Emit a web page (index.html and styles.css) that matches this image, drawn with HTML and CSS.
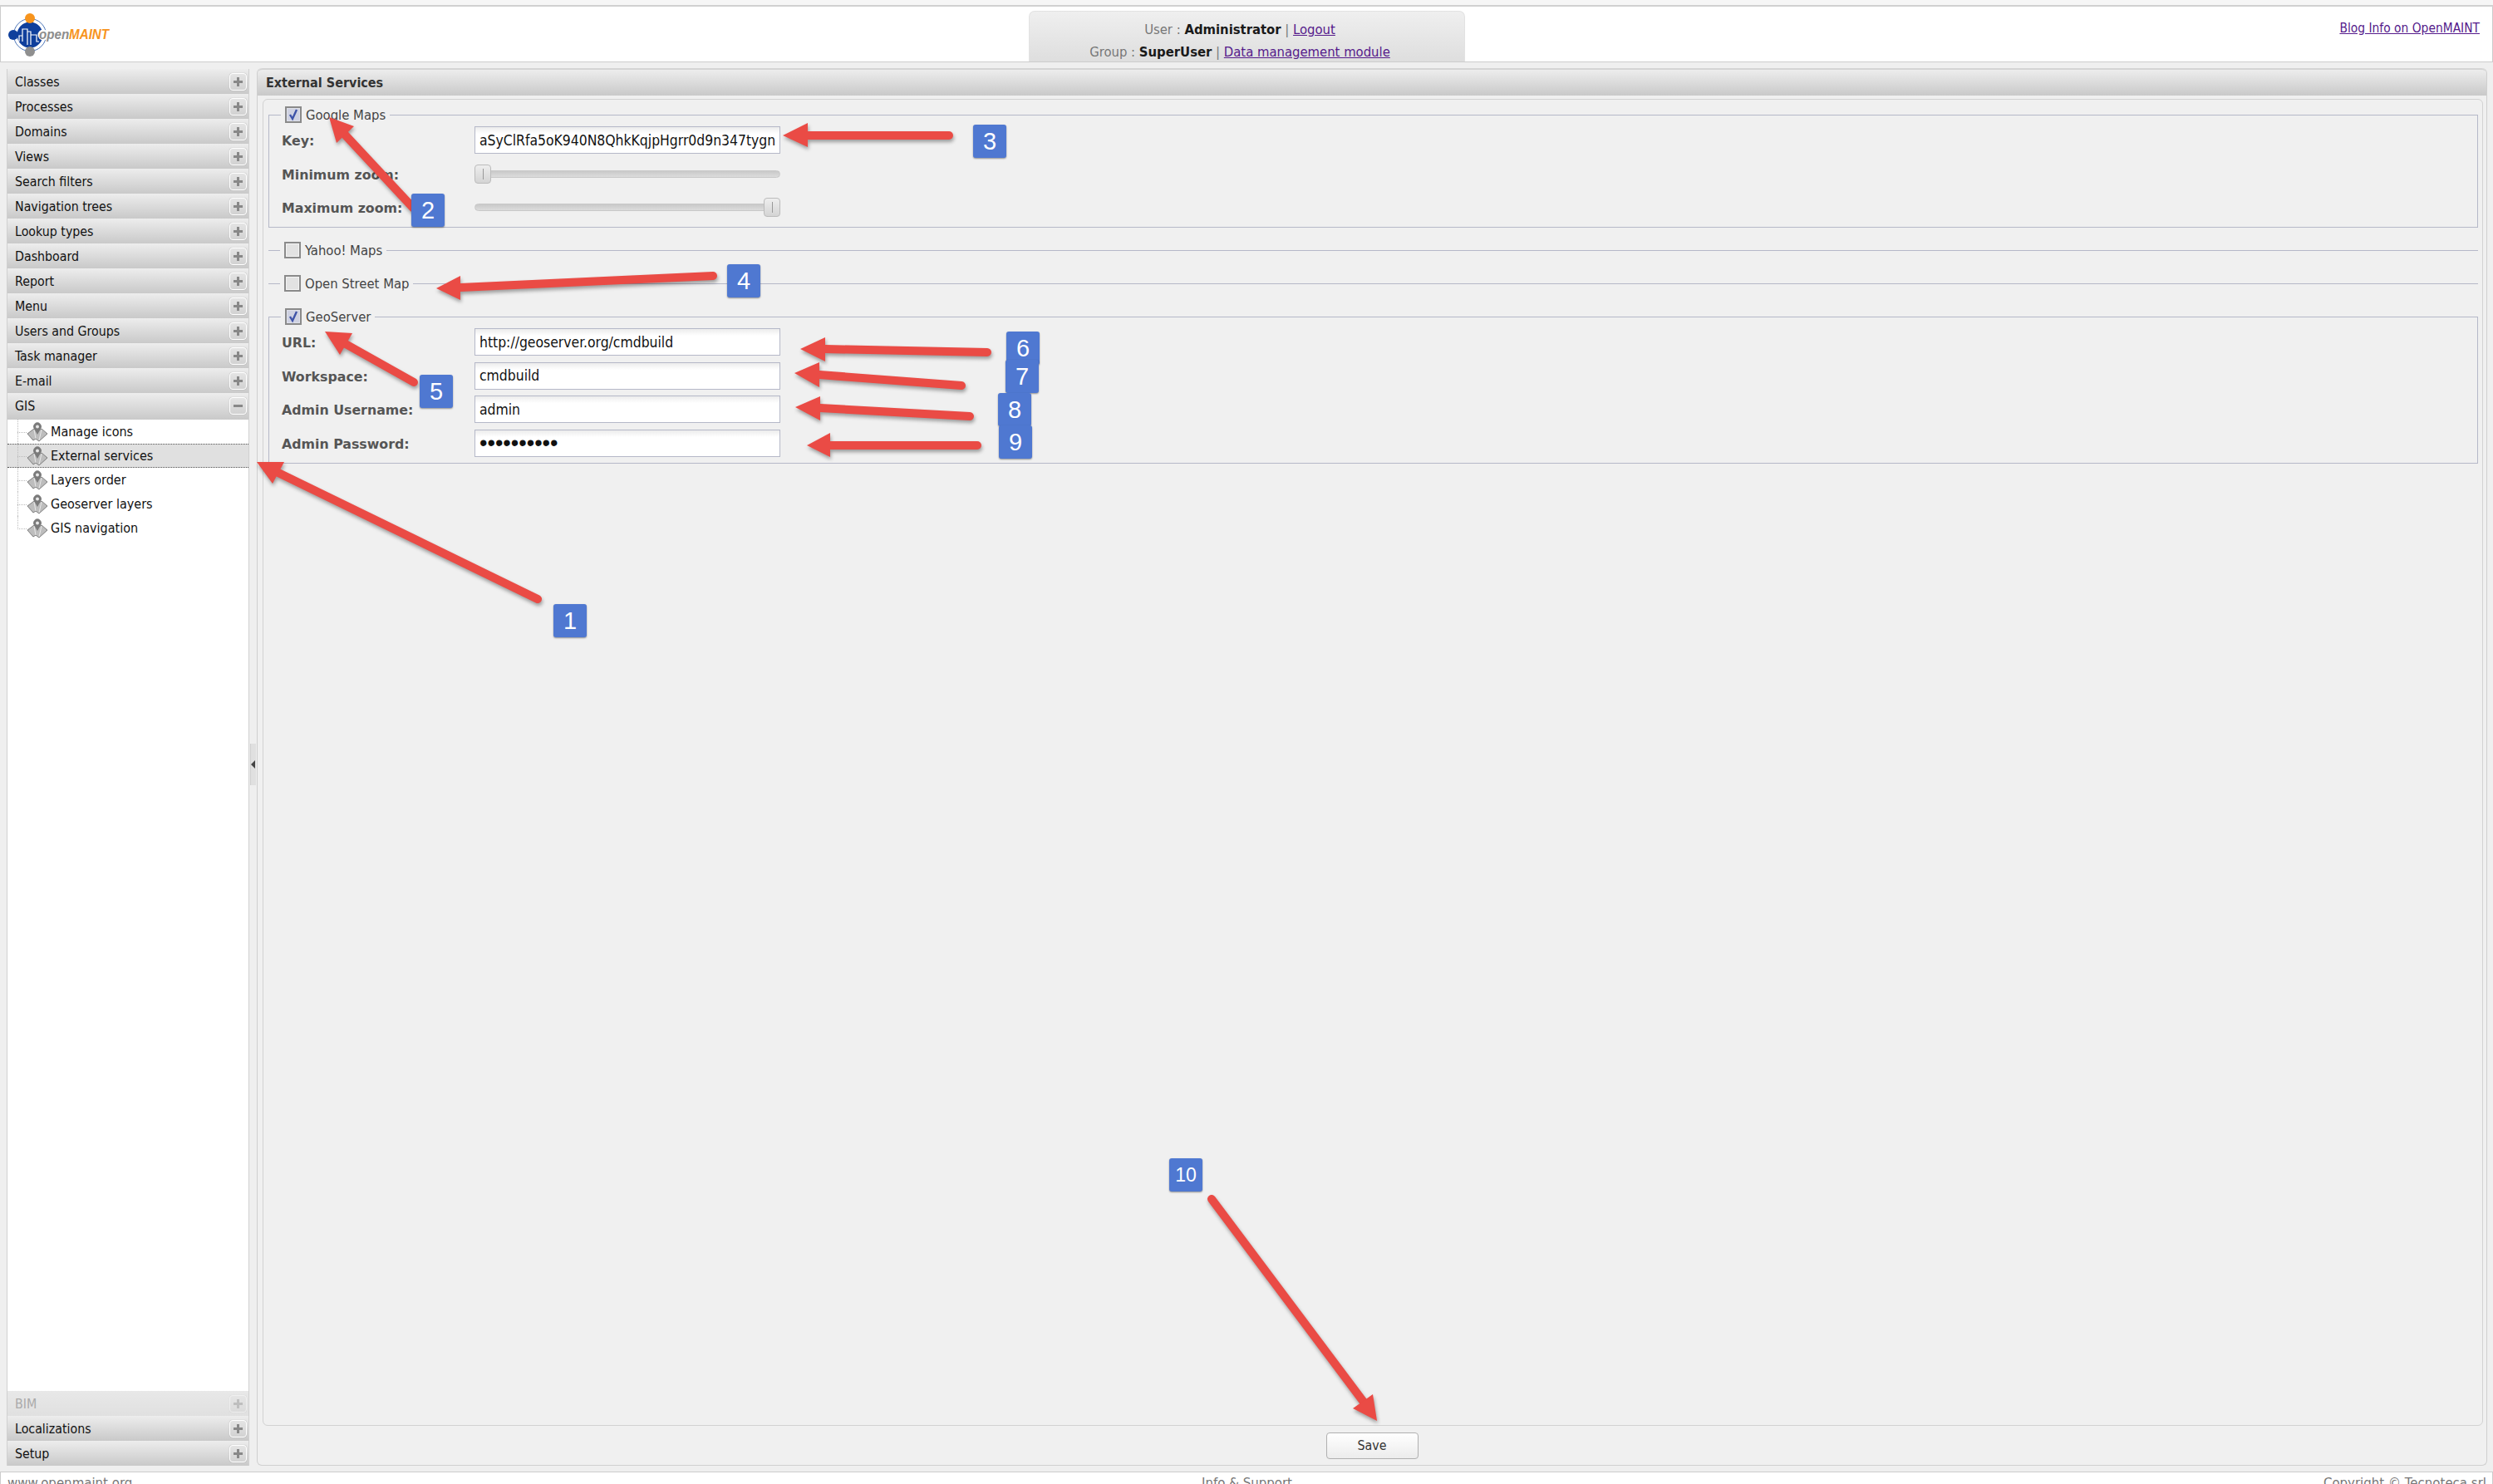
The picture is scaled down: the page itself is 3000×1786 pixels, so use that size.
FILE: index.html
```html
<!DOCTYPE html>
<html lang="en">
<head>
  <meta charset="UTF-8" />
  <title>openMAINT - External Services</title>
  <link rel="stylesheet" href="styles.css">
</head>
<body>
  <svg class="defs" width="0" height="0">
    <symbol id="map-icon" viewBox="0 0 24 24">
      <polygon points="0,14 8,8 12,11 17,8 24,14 14,23 10,20 7,22" fill="#bdbdbd" stroke="#7d7d7d"/>
      <path d="M8 9 L10 20 M17 9 L14 22" stroke="#e8e8e8" fill="none"/>
      <path d="M12 15 L8 8 A4.8 4.8 0 1 1 16 8 Z" fill="#7a7a7a"/>
      <circle cx="12" cy="5.5" r="2" fill="#e8e8e8"/>
    </symbol>
    <symbol id="check-on" viewBox="0 0 20 20">
      <rect x="1" y="1" width="18" height="18" fill="#dfe1ea" stroke="#8a8a8a" stroke-width="2"/>
      <rect x="3" y="3" width="14" height="14" fill="#cfd2e2"/>
      <path d="M6 10 L9 15 L14 4" fill="none" stroke="#3e53a8" stroke-width="2.4"/>
    </symbol>
    <symbol id="check-off" viewBox="0 0 20 20">
      <rect x="1" y="1" width="18" height="18" fill="#f4f4f4" stroke="#8a8a8a" stroke-width="2"/>
      <rect x="3" y="3" width="14" height="14" fill="#e2e2e2"/>
    </symbol>
  </svg>

  <div class="top-strip"></div>

  <header class="app-header">
    <svg class="logo" width="136" height="66" viewBox="0 0 136 66">
      <circle cx="35" cy="34" r="19.5" fill="none" stroke="#4a74b8" stroke-width="1"/>
      <circle cx="35" cy="34" r="15.5" fill="#0f3f9c"/>
      <path d="M22 42 V35 H26 V42 M26 42 V27 H32 V46 M32 46 V30 H36 V46 M36 46 V34 H43 V42 H46" fill="none" stroke="#fff" stroke-width="1.2"/>
      <circle cx="35" cy="14" r="6" fill="#f7941d"/>
      <circle cx="15" cy="34" r="6" fill="#0f3f9c"/>
      <circle cx="35" cy="54" r="6" fill="#8f8f8f"/>
      <circle cx="51" cy="34" r="6.5" fill="#fff"/>
      <text class="logo-text" x="46" y="39" textLength="84" lengthAdjust="spacingAndGlyphs"><tspan class="logo-open">open</tspan><tspan class="logo-maint">MAINT</tspan></text>
    </svg>
    <div class="user-box">
      <p>User : <strong>Administrator</strong> | <a href="#">Logout</a></p>
      <p>Group : <strong>SuperUser</strong> | <a href="#">Data management module</a></p>
    </div>
    <a class="blog-link" href="#">Blog Info on OpenMAINT</a>
  </header>

  <div class="workspace">
    <aside class="sidebar">
      <div class="acc-row">Classes<span class="toggle"></span></div>
      <div class="acc-row">Processes<span class="toggle"></span></div>
      <div class="acc-row">Domains<span class="toggle"></span></div>
      <div class="acc-row">Views<span class="toggle"></span></div>
      <div class="acc-row">Search filters<span class="toggle"></span></div>
      <div class="acc-row">Navigation trees<span class="toggle"></span></div>
      <div class="acc-row">Lookup types<span class="toggle"></span></div>
      <div class="acc-row">Dashboard<span class="toggle"></span></div>
      <div class="acc-row">Report<span class="toggle"></span></div>
      <div class="acc-row">Menu<span class="toggle"></span></div>
      <div class="acc-row">Users and Groups<span class="toggle"></span></div>
      <div class="acc-row">Task manager<span class="toggle"></span></div>
      <div class="acc-row">E-mail<span class="toggle"></span></div>
      <div class="acc-row acc-open">GIS<span class="toggle toggle-minus"></span></div>
      <ul class="tree">
        <li class="tree-item"><svg class="tree-icon"><use href="#map-icon"/></svg>Manage icons</li>
        <li class="tree-item tree-selected"><svg class="tree-icon"><use href="#map-icon"/></svg>External services</li>
        <li class="tree-item"><svg class="tree-icon"><use href="#map-icon"/></svg>Layers order</li>
        <li class="tree-item"><svg class="tree-icon"><use href="#map-icon"/></svg>Geoserver layers</li>
        <li class="tree-item tree-last"><svg class="tree-icon"><use href="#map-icon"/></svg>GIS navigation</li>
      </ul>
      <div class="acc-row acc-disabled">BIM<span class="toggle"></span></div>
      <div class="acc-row">Localizations<span class="toggle"></span></div>
      <div class="acc-row">Setup<span class="toggle"></span></div>
    </aside>

    <div class="splitter"><span class="collapse-tool"></span></div>

    <main class="main-panel">
      <h1 class="panel-title">External Services</h1>
      <div class="form-panel">
        <fieldset class="group group-first">
          <legend><svg class="check"><use href="#check-on"/></svg>Google Maps</legend>
          <div class="field-grid">
            <label>Key:</label>
            <input type="text" value="aSyClRfa5oK940N8QhkKqjpHgrr0d9n347tygn">
            <label>Minimum zoom:</label>
            <div class="slider"><span class="thumb"></span></div>
            <label>Maximum zoom:</label>
            <div class="slider slider-max"><span class="thumb"></span></div>
          </div>
        </fieldset>
        <fieldset class="group group-closed group-yahoo">
          <legend><svg class="check"><use href="#check-off"/></svg>Yahoo! Maps</legend>
        </fieldset>
        <fieldset class="group group-closed">
          <legend><svg class="check"><use href="#check-off"/></svg>Open Street Map</legend>
        </fieldset>
        <fieldset class="group">
          <legend><svg class="check"><use href="#check-on"/></svg>GeoServer</legend>
          <div class="field-grid">
            <label>URL:</label>
            <input type="text" value="http://geoserver.org/cmdbuild">
            <label>Workspace:</label>
            <input type="text" value="cmdbuild">
            <label>Admin Username:</label>
            <input type="text" value="admin">
            <label>Admin Password:</label>
            <input class="password-input" type="password" value="secret1234">
          </div>
        </fieldset>
      </div>
      <div class="panel-toolbar">
        <button class="save-btn">Save</button>
      </div>
    </main>
  </div>

  <footer class="app-footer">
    <span>www.openmaint.org</span>
    <span>Info &amp; Support</span>
    <span>Copyright &copy; Tecnoteca srl</span>
  </footer>

  <!-- red arrows and numbers drawn on top of the screenshot -->
  <svg class="arrows" width="3000" height="1786" viewBox="0 0 3000 1786">
    <g class="arrow">
      <line x1="647" y1="721" x2="335" y2="569"/><polygon points="309,556 342,556 328,582"/>
    </g>
    <g class="arrow">
      <line x1="497" y1="250" x2="415" y2="162"/><polygon points="396,141 426,152 405,172"/>
    </g>
    <g class="arrow">
      <line x1="1142" y1="163" x2="972" y2="163"/><polygon points="942,163 972,148 972,177"/>
    </g>
    <g class="arrow">
      <line x1="858" y1="332" x2="554" y2="346"/><polygon points="525,347 554,332 554,361"/>
    </g>
    <g class="arrow">
      <line x1="498" y1="460" x2="416" y2="414"/><polygon points="391,399 424,401 409,427"/>
    </g>
    <g class="arrow">
      <line x1="1188" y1="424" x2="993" y2="420"/><polygon points="963,420 993,406 993,435"/>
    </g>
    <g class="arrow">
      <line x1="1157" y1="464" x2="986" y2="451"/><polygon points="956,449 986,436 986,466"/>
    </g>
    <g class="arrow">
      <line x1="1167" y1="501" x2="987" y2="491"/><polygon points="957,490 987,477 987,506"/>
    </g>
    <g class="arrow">
      <line x1="1176" y1="536" x2="999" y2="536"/><polygon points="971,536 999,521 999,550"/>
    </g>
    <g class="arrow">
      <line x1="1458" y1="1443" x2="1640" y2="1686"/><polygon points="1657,1710 1628,1695 1652,1678"/>
    </g>
  </svg>
  <div class="badge badge-1">1</div>
  <div class="badge badge-2">2</div>
  <div class="badge badge-3">3</div>
  <div class="badge badge-4">4</div>
  <div class="badge badge-5">5</div>
  <div class="badge badge-6">6</div>
  <div class="badge badge-7">7</div>
  <div class="badge badge-8">8</div>
  <div class="badge badge-9">9</div>
  <div class="badge badge-10">10</div>
</body>
</html>
```

FILE: styles.css
```css
* {
  margin: 0;
  padding: 0;
  box-sizing: border-box;
}

html, body {
  height: 100%;
  overflow: hidden;
}

body {
  position: relative;
  display: flex;
  flex-direction: column;
  height: 1786px;
  font-family: "DejaVu Sans Condensed", "DejaVu Sans", sans-serif;
  font-size: 15.8px;
  color: #111;
  background-color: #efefef;
}

.defs {
  position: absolute;
}

a {
  color: #551a8b;
}

/* header */
.top-strip {
  height: 8px;
  flex: none;
  background-color: #f6f6f6;
  border-bottom: 2px solid #d0d0d0;
}

.app-header {
  position: relative;
  display: flex;
  justify-content: center;
  flex: none;
  height: 67px;
  padding-top: 5px;
  background-color: #fff;
  border-left: 1px solid #ccc;
  border-right: 1px solid #ccc;
  border-bottom: 1px solid #ccc;
}

.logo {
  position: absolute;
  left: 0;
  top: 0;
}

.logo-text {
  font-family: "Liberation Sans", sans-serif;
  font-size: 17px;
  font-weight: bold;
  font-style: italic;
}

.logo-open {
  fill: #8d8d8d;
}

.logo-maint {
  fill: #f7941d;
}

.user-box {
  width: 525px;
  height: 61px;
  padding: 8px 16px 0 0;
  text-align: center;
  font-size: 16.5px;
  line-height: 27px;
  color: #777;
  background: linear-gradient(#efefef, #dedede);
  border: 1px solid #e2e2e2;
  border-bottom: none;
  border-radius: 7px 7px 0 0;
}

.user-box strong {
  color: #1a1a1a;
}

.blog-link {
  position: absolute;
  right: 15px;
  top: 17px;
  font-size: 15.4px;
  line-height: 18px;
}

/* main area */
.workspace {
  flex: 1;
  display: flex;
  min-height: 0;
  padding: 7px 7px 7px 8px;
}

.sidebar {
  display: flex;
  flex-direction: column;
  flex: none;
  width: 292px;
  margin-top: 1px;
  background-color: #fff;
  border-left: 1px solid #d0d0d0;
  border-right: 1px solid #d0d0d0;
}

.acc-row {
  position: relative;
  flex: none;
  height: 30px;
  padding-left: 9px;
  line-height: 32px;
  background: linear-gradient(#ededed, #c9c9c9);
}

.acc-open {
  height: 32px;
}

.acc-disabled {
  color: #aaa;
  background: linear-gradient(#e8e8e8, #e0e0e0);
}

.toggle {
  position: absolute;
  right: 2px;
  top: 5px;
  width: 21px;
  height: 21px;
  background: linear-gradient(#e4e4e4, #d2d2d2);
  border: 1px solid #fff;
  border-radius: 4px;
  box-shadow: 0 0 1px #999;
}

.toggle::before,
.toggle::after {
  content: "";
  position: absolute;
  background-color: #888;
}

.toggle::before {
  left: 4px;
  top: 8px;
  width: 11px;
  height: 3px;
}

.toggle::after {
  left: 8px;
  top: 4px;
  width: 3px;
  height: 11px;
}

.toggle-minus::after {
  display: none;
}

.acc-disabled .toggle {
  opacity: 0.4;
}

.tree {
  flex: 1;
  list-style: none;
  padding-top: 0;
  font-size: 16px;
}

.tree-item {
  position: relative;
  display: flex;
  align-items: center;
  height: 29px;
  padding-left: 24px;
  border-top: 1px dotted transparent;
  border-bottom: 1px dotted transparent;
}

.tree-item::before {
  content: "";
  position: absolute;
  left: 12px;
  top: -1px;
  bottom: -1px;
  border-left: 1px dotted #bbb;
}

.tree-item::after {
  content: "";
  position: absolute;
  left: 12px;
  top: 14px;
  width: 11px;
  border-top: 1px dotted #bbb;
}

.tree-last::before {
  bottom: 14px;
}

.tree-selected {
  background-color: #e0e0e0;
  border-top-color: #555;
  border-bottom-color: #555;
}

.tree-icon {
  width: 24px;
  height: 24px;
  margin-right: 4px;
}

.splitter {
  position: relative;
  flex: none;
  width: 9px;
}

.collapse-tool {
  position: absolute;
  left: 1px;
  top: 813px;
  width: 7px;
  height: 50px;
  background-color: #e0e0e0;
  border-left: 1px solid #cfcfcf;
}

.collapse-tool::after {
  content: "";
  position: absolute;
  left: 0;
  top: 20px;
  border-style: solid;
  border-width: 5px 5px 5px 0;
  border-color: transparent #444 transparent transparent;
}

.main-panel {
  flex: 1;
  display: flex;
  flex-direction: column;
  min-width: 0;
  background-color: #f0f0f0;
  border: 1px solid #cfcfcf;
  border-top: none;
  border-radius: 6px;
}

.panel-title {
  flex: none;
  height: 33px;
  padding-left: 10px;
  font-size: 16px;
  line-height: 31px;
  color: #333;
  background: linear-gradient(#ededed, #c9c9c9);
  border-top: 2px solid #d4d4d4;
  border-radius: 6px 6px 0 0;
}

.form-panel {
  flex: 1;
  margin: 4px 4px 0 6px;
  padding: 8px 5px 0 6px;
  border: 1px solid #d2d2d2;
  border-radius: 6px;
}

.group {
  margin-bottom: 20px;
  padding: 0 15px 7px;
  border: 1px solid #b5b8c8;
}

.group-first {
  margin-bottom: 17px;
}

.group-closed {
  padding: 0;
  border-width: 1px 0 0;
}

.group legend {
  display: flex;
  align-items: center;
  margin-left: -1px;
  padding: 0 5px;
  height: 20px;
  font-size: 16.5px;
  color: #444;
}

.group-closed legend {
  margin-left: 14px;
}

.check {
  width: 20px;
  height: 20px;
  margin-right: 5px;
}

.field-grid {
  display: grid;
  grid-template-columns: 232px 368px;
  grid-auto-rows: 33px;
  row-gap: 7.5px;
  align-items: center;
  padding-top: 4px;
}

.field-grid label {
  padding-top: 2px;
  font-family: "DejaVu Sans", sans-serif;
  font-size: 15.8px;
  font-weight: bold;
  color: #555;
}

.field-grid input {
  width: 368px;
  height: 33px;
  padding: 0 4px 0 5px;
  font: inherit;
  font-size: 17.4px;
  color: #111;
  background: linear-gradient(#ececec, #fff 8px);
  border: 1px solid #b5b8c8;
  outline: none;
}

.field-grid .password-input {
  font-family: "Liberation Sans", sans-serif;
  font-size: 27px;
}

.slider {
  position: relative;
  height: 9px;
  background: linear-gradient(#c9c9c9, #dcdcdc);
  border: 1px solid #c8c8c8;
  border-radius: 5px;
}

.thumb {
  position: absolute;
  left: -1px;
  top: -8px;
  width: 20px;
  height: 23px;
  background: linear-gradient(#eee, #d4d4d4);
  border: 1px solid #bbb;
  border-radius: 4px;
}

.slider-max .thumb {
  left: auto;
  right: -1px;
}

.thumb::after {
  content: "";
  position: absolute;
  left: 9px;
  top: 4px;
  height: 13px;
  border-left: 1px solid #999;
}

.panel-toolbar {
  flex: none;
  display: flex;
  justify-content: center;
  align-items: center;
  height: 47px;
}

.save-btn {
  width: 111px;
  height: 32px;
  font: inherit;
  font-size: 15.8px;
  color: #333;
  background: linear-gradient(#fff, #ececec);
  border: 1px solid #b0b0b0;
  border-radius: 4px;
}

.app-footer {
  display: grid;
  grid-template-columns: 1fr 1fr 1fr;
  flex: none;
  height: 15px;
  overflow: hidden;
  padding: 4px 7px 0 8px;
  font-family: "DejaVu Sans", sans-serif;
  font-size: 15px;
  line-height: 18px;
  color: #777;
  background-color: #fff;
  border: 1px solid #ccc;
  border-bottom: none;
}

.app-footer span:nth-child(2) {
  text-align: center;
}

.app-footer span:nth-child(3) {
  text-align: right;
}

/* annotations */
.arrows {
  position: absolute;
  left: 0;
  top: 0;
  filter: drop-shadow(1px 3px 2px rgba(0, 0, 0, 0.35));
}

.arrow line {
  stroke: #ea4b45;
  stroke-width: 10;
  stroke-linecap: round;
}

.arrow polygon {
  fill: #ea4b45;
}

.badge {
  position: absolute;
  width: 40px;
  height: 40px;
  font-family: "Liberation Sans", sans-serif;
  font-size: 29px;
  line-height: 40px;
  text-align: center;
  color: #fff;
  background-color: #4f78d1;
  border-radius: 3px;
  box-shadow: 0 1px 2px rgba(0, 0, 0, 0.4);
}

.badge-1 { left: 666px; top: 727px; }
.badge-2 { left: 495px; top: 233px; }
.badge-3 { left: 1171px; top: 150px; }
.badge-4 { left: 875px; top: 318px; }
.badge-5 { left: 505px; top: 451px; }
.badge-6 { left: 1211px; top: 399px; }
.badge-7 { left: 1210px; top: 433px; }
.badge-8 { left: 1201px; top: 473px; }
.badge-9 { left: 1202px; top: 512px; }
.badge-10 { left: 1407px; top: 1394px; font-size: 23px; }
```
